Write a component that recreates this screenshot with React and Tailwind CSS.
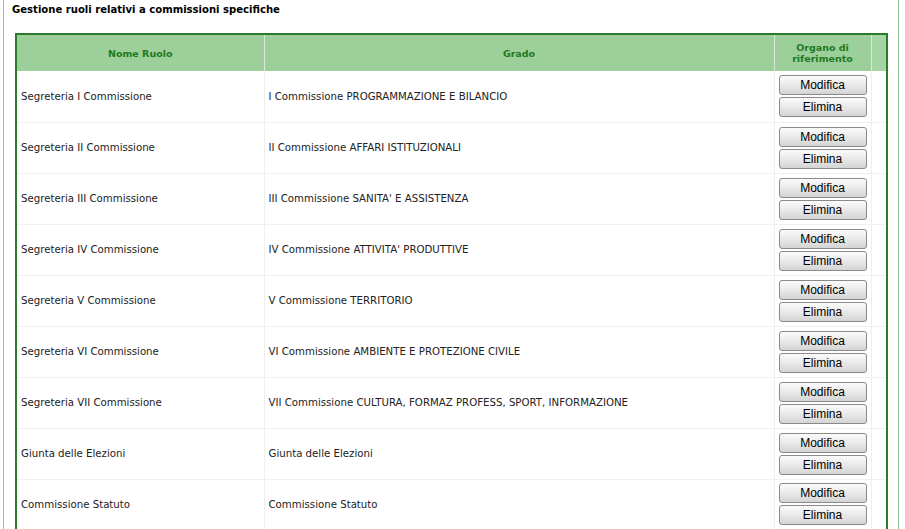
import React from "react";

const rows = [
  ["Segreteria I Commissione", "I Commissione PROGRAMMAZIONE E BILANCIO"],
  ["Segreteria II Commissione", "II Commissione AFFARI ISTITUZIONALI"],
  ["Segreteria III Commissione", "III Commissione SANITA' E ASSISTENZA"],
  ["Segreteria IV Commissione", "IV Commissione ATTIVITA' PRODUTTIVE"],
  ["Segreteria V Commissione", "V Commissione TERRITORIO"],
  ["Segreteria VI Commissione", "VI Commissione AMBIENTE E PROTEZIONE CIVILE"],
  ["Segreteria VII Commissione", "VII Commissione CULTURA, FORMAZ PROFESS, SPORT, INFORMAZIONE"],
  ["Giunta delle Elezioni", "Giunta delle Elezioni"],
  ["Commissione Statuto", "Commissione Statuto"],
];

function Btn({ children }) {
  return (
    <button className="w-[88px] h-[20px] rounded-[3px] border border-[#8a8a8a] bg-gradient-to-b from-[#fbfbfb] via-[#e9e9e9] to-[#d4d4d4] text-[12px] leading-[18px] text-black font-['Liberation_Sans',Arial,sans-serif]">
      {children}
    </button>
  );
}

export default function App() {
  return (
    <div className="w-[905px] h-[529px] overflow-hidden bg-white font-['DejaVu_Sans',Verdana,sans-serif]">
      <div className="ml-[3px] w-[896px] h-[529px] border-l border-r border-[#8fc88d] pl-[8px] pt-[2px]">
        <div className="text-[11.2px] font-bold text-black leading-[16px] font-['DejaVu_Sans_Condensed','DejaVu_Sans',sans-serif]">
          Gestione ruoli relativi a commissioni specifiche
        </div>
        <table className="mt-[15px] ml-[3px] w-[873px] border-collapse border-2 border-[#2c7a2c] text-[10.2px] text-[#222]">
          <thead>
            <tr className="bg-[#9ccf9a] h-[37px] text-[#1f7a1f] font-bold text-[9.5px] leading-[11px]">
              <th className="w-[248px] border-r border-[#d6ebd5] font-bold">Nome Ruolo</th>
              <th className="w-[510px] border-r border-[#d6ebd5] font-bold">Grado</th>
              <th className="w-[97px] border-r border-[#d6ebd5] font-bold">
                Organo di
                <br />
                riferimento
              </th>
              <th className="bg-[#a7d4a5]"></th>
            </tr>
          </thead>
          <tbody>
            {rows.map(([a, b], i) => (
              <tr key={i} className="h-[51px] border-b border-[#f0f0f0]">
                <td className="pl-[4px] border-r border-[#eeeeee] align-middle">{a}</td>
                <td className="pl-[4px] border-r border-[#eeeeee] align-middle">{b}</td>
                <td className="border-r border-[#eeeeee] align-middle">
                  <div className="flex flex-col items-center gap-[2px]">
                    <Btn>Modifica</Btn>
                    <Btn>Elimina</Btn>
                  </div>
                </td>
                <td></td>
              </tr>
            ))}
          </tbody>
        </table>
      </div>
    </div>
  );
}
